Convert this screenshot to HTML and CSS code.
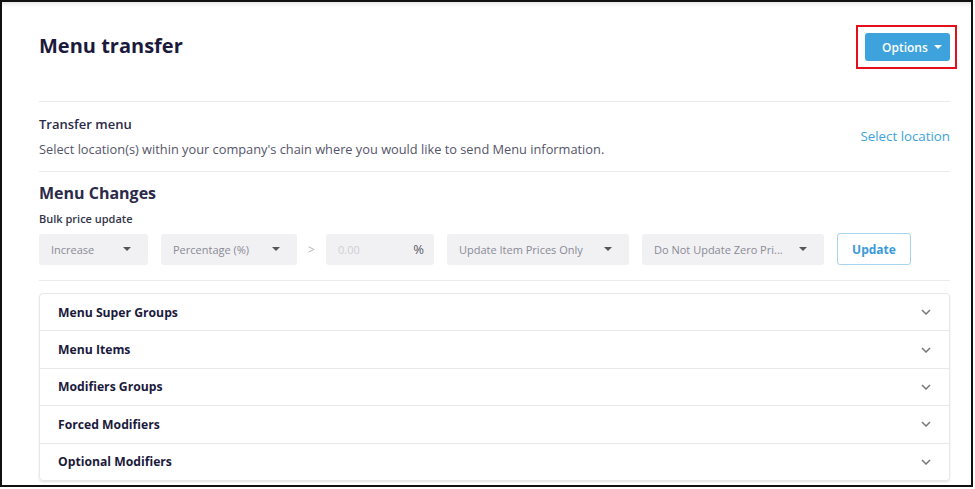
FILE: index.html
```html
<!DOCTYPE html>
<html lang="en">
<head>
    <meta charset="UTF-8">
    <meta name="viewport" content="width=device-width, initial-scale=1.0">
    <title>Menu transfer</title>
    <link rel="stylesheet" href="styles.css">
</head>
<body>
    <div class="frame">
        <div class="page">
            <header>
                <h1>Menu transfer</h1>
                <div class="options-wrap">
                    <button class="options-btn">Options <span class="caret caret-white"></span></button>
                </div>
            </header>

            <section class="transfer">
                <div class="transfer-text">
                    <h3>Transfer menu</h3>
                    <p>Select location(s) within your company's chain where you would like to send Menu information.</p>
                </div>
                <a class="link" href="#">Select location</a>
            </section>

            <section class="changes">
                <h2>Menu Changes</h2>
                <div class="label">Bulk price update</div>
                <div class="controls">
                    <div class="select w-increase">Increase <span class="caret"></span></div>
                    <div class="select w-percent">Percentage (%) <span class="caret"></span></div>
                    <span class="sep">&gt;</span>
                    <div class="select w-value"><span class="placeholder">0.00</span><span class="unit">%</span></div>
                    <div class="select w-items">Update Item Prices Only <span class="caret"></span></div>
                    <div class="select w-zero">Do Not Update Zero Pri... <span class="caret"></span></div>
                    <button class="update-btn">Update</button>
                </div>
            </section>

            <div class="accordion">
                <div class="acc-row"><span>Menu Super Groups</span><svg class="chev" width="10" height="6" viewBox="0 0 10 6"><path d="M1 1l4 4 4-4" fill="none" stroke="#777" stroke-width="1.5"/></svg></div>
                <div class="acc-row"><span>Menu Items</span><svg class="chev" width="10" height="6" viewBox="0 0 10 6"><path d="M1 1l4 4 4-4" fill="none" stroke="#777" stroke-width="1.5"/></svg></div>
                <div class="acc-row"><span>Modifiers Groups</span><svg class="chev" width="10" height="6" viewBox="0 0 10 6"><path d="M1 1l4 4 4-4" fill="none" stroke="#777" stroke-width="1.5"/></svg></div>
                <div class="acc-row"><span>Forced Modifiers</span><svg class="chev" width="10" height="6" viewBox="0 0 10 6"><path d="M1 1l4 4 4-4" fill="none" stroke="#777" stroke-width="1.5"/></svg></div>
                <div class="acc-row"><span>Optional Modifiers</span><svg class="chev" width="10" height="6" viewBox="0 0 10 6"><path d="M1 1l4 4 4-4" fill="none" stroke="#777" stroke-width="1.5"/></svg></div>
            </div>
        </div>
    </div>
</body>
</html>
```

FILE: styles.css
```css
body {
    margin: 0;
    background-color: #fff;
    font-family: "Open Sans", "Noto Sans", Arial, sans-serif;
    color: #1b1a3d;
}
.frame {
    width: 973px;
    height: 487px;
    box-sizing: border-box;
    border: 2px solid #111;
    box-shadow: inset 0 6px 6px -6px rgba(0, 0, 0, 0.18);
    overflow: hidden;
}
.page {
    padding: 31px 21px 0 37px;
}
header {
    display: flex;
    justify-content: space-between;
    align-items: flex-start;
    margin-bottom: 40px;
}
header h1 {
    margin: 0;
    font-size: 20px;
    line-height: 26px;
    font-weight: 700;
    color: #1b1a3d;
}
.options-wrap {
    position: relative;
}
.options-wrap::after {
    content: "";
    position: absolute;
    left: -9px;
    top: -8px;
    right: -7px;
    bottom: -8px;
    border: 2px solid #e3101c;
}
.options-btn {
    display: flex;
    align-items: center;
    gap: 6px;
    width: 85px;
    height: 28px;
    padding: 0 0 0 17px;
    border: none;
    border-radius: 3px;
    background-color: #3ea3dc;
    color: #fff;
    font-family: inherit;
    font-size: 12px;
    font-weight: 600;
}
.caret {
    display: inline-block;
    width: 0;
    height: 0;
    border-left: 4px solid transparent;
    border-right: 4px solid transparent;
    border-top: 4px solid #555;
}
.caret-white {
    border-top-color: #fff;
}
.transfer {
    display: flex;
    align-items: center;
    justify-content: space-between;
    border-top: 1px solid #ebebeb;
    border-bottom: 1px solid #ebebeb;
    padding: 12px 0;
}
.transfer h3 {
    margin: 0 0 5px;
    font-size: 13px;
    line-height: 20px;
    font-weight: 600;
    color: #2b2a48;
}
.transfer p {
    margin: 0;
    font-size: 12.8px;
    line-height: 20px;
    color: #55556a;
}
.link {
    font-size: 13.3px;
    color: #3ea3dc;
    text-decoration: none;
    margin-bottom: 1px;
}
.changes {
    padding: 10px 0 15px;
    border-bottom: 1px solid #ebebeb;
}
.changes h2 {
    margin: 0 0 7px;
    font-size: 16px;
    line-height: 22px;
    font-weight: 700;
    color: #2b2a48;
}
.label {
    font-size: 11px;
    line-height: 16px;
    font-weight: 600;
    color: #33334a;
    margin-bottom: 6px;
}
.controls {
    display: flex;
    align-items: center;
}
.select {
    display: flex;
    align-items: center;
    justify-content: space-between;
    box-sizing: border-box;
    height: 31px;
    padding: 0 17px 0 12px;
    background-color: #f1f1f3;
    border-radius: 3px;
    font-size: 11px;
    color: #8a8a96;
}
.w-increase { width: 109px; margin-right: 13px; }
.w-percent { width: 136px; }
.sep {
    width: 29px;
    text-align: center;
    font-size: 12px;
    color: #b5b5b5;
}
.w-value { width: 108px; margin-right: 13px; padding-right: 10px; }
.placeholder { color: #cfcfd4; }
.unit { color: #5a5a66; font-size: 13px; }
.w-items { width: 182px; margin-right: 13px; }
.w-zero { width: 182px; margin-right: 13px; }
.update-btn {
    width: 74px;
    height: 32px;
    border: 1px solid #a6d5f0;
    border-radius: 3px;
    background-color: #fff;
    color: #3a9ad9;
    font-family: inherit;
    font-size: 12px;
    font-weight: 700;
}
.accordion {
    margin-top: 12px;
    border: 1px solid #e8e8ea;
    border-radius: 4px;
    box-shadow: 0 1px 2px rgba(0, 0, 0, 0.12);
}
.acc-row {
    display: flex;
    align-items: center;
    justify-content: space-between;
    height: 36.4px;
    padding: 0 18px 0 18px;
    border-top: 1px solid #e8e8ea;
    font-size: 12.2px;
    font-weight: 700;
    color: #1b1a3d;
}
.acc-row:first-child {
    border-top: none;
}
.chev {
    display: block;
}
```
